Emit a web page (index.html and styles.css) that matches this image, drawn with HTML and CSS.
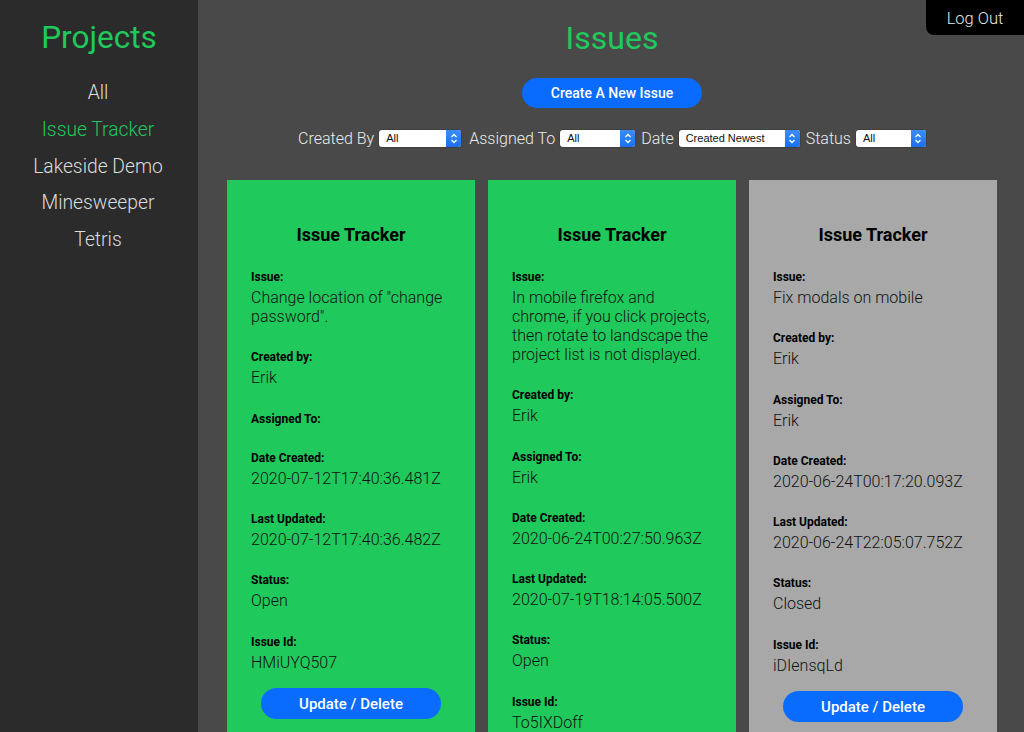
FILE: index.html
```html
<!DOCTYPE html>
<html lang="en">
<head>
<meta charset="utf-8">
<title>Issues</title>
<link rel="stylesheet" href="styles.css">
</head>
<body>
<div class="app">
  <aside class="sidebar">
    <h1 class="side-title">Projects</h1>
    <nav class="side-nav">
      <a class="side-link">All</a>
      <a class="side-link active">Issue Tracker</a>
      <a class="side-link">Lakeside Demo</a>
      <a class="side-link">Minesweeper</a>
      <a class="side-link">Tetris</a>
    </nav>
  </aside>
  <main class="main">
    <button class="logout">Log Out</button>
    <h1 class="main-title">Issues</h1>
    <div class="create-row"><button class="pill create">Create A New Issue</button></div>
    <div class="filters">
      <span class="flabel">Created By</span>
      <span class="select w82 gap8"><span class="sel-text">All</span><span class="sel-arrow"><svg width="8" height="11" viewBox="0 0 8 11"><path d="M1.5 4 L4 1.5 L6.5 4 M1.5 7 L4 9.5 L6.5 7" fill="none" stroke="#fff" stroke-width="1.3"/></svg></span></span>
      <span class="flabel">Assigned To</span>
      <span class="select w75 gap6"><span class="sel-text">All</span><span class="sel-arrow"><svg width="8" height="11" viewBox="0 0 8 11"><path d="M1.5 4 L4 1.5 L6.5 4 M1.5 7 L4 9.5 L6.5 7" fill="none" stroke="#fff" stroke-width="1.3"/></svg></span></span>
      <span class="flabel">Date</span>
      <span class="select w121 gap6"><span class="sel-text">Created Newest</span><span class="sel-arrow"><svg width="8" height="11" viewBox="0 0 8 11"><path d="M1.5 4 L4 1.5 L6.5 4 M1.5 7 L4 9.5 L6.5 7" fill="none" stroke="#fff" stroke-width="1.3"/></svg></span></span>
      <span class="flabel">Status</span>
      <span class="select w70"><span class="sel-text">All</span><span class="sel-arrow"><svg width="8" height="11" viewBox="0 0 8 11"><path d="M1.5 4 L4 1.5 L6.5 4 M1.5 7 L4 9.5 L6.5 7" fill="none" stroke="#fff" stroke-width="1.3"/></svg></span></span>
    </div>
    <div class="cards">
      <section class="card open">
        <h2 class="card-title">Issue Tracker</h2>
        <div class="field"><div class="label">Issue:</div><div class="value">Change location of "change password".</div></div>
        <div class="field"><div class="label">Created by:</div><div class="value">Erik</div></div>
        <div class="field"><div class="label">Assigned To:</div><div class="value"></div></div>
        <div class="field"><div class="label">Date Created:</div><div class="value">2020-07-12T17:40:36.481Z</div></div>
        <div class="field"><div class="label">Last Updated:</div><div class="value">2020-07-12T17:40:36.482Z</div></div>
        <div class="field"><div class="label">Status:</div><div class="value">Open</div></div>
        <div class="field last"><div class="label">Issue Id:</div><div class="value">HMiUYQ507</div></div>
        <button class="pill update">Update / Delete</button>
      </section>
      <section class="card open">
        <h2 class="card-title">Issue Tracker</h2>
        <div class="field"><div class="label">Issue:</div><div class="value">In mobile firefox and chrome, if you click projects, then rotate to landscape the project list is not displayed.</div></div>
        <div class="field"><div class="label">Created by:</div><div class="value">Erik</div></div>
        <div class="field"><div class="label">Assigned To:</div><div class="value">Erik</div></div>
        <div class="field"><div class="label">Date Created:</div><div class="value">2020-06-24T00:27:50.963Z</div></div>
        <div class="field"><div class="label">Last Updated:</div><div class="value">2020-07-19T18:14:05.500Z</div></div>
        <div class="field"><div class="label">Status:</div><div class="value">Open</div></div>
        <div class="field last"><div class="label">Issue Id:</div><div class="value">To5IXDoff</div></div>
        <button class="pill update">Update / Delete</button>
      </section>
      <section class="card closed">
        <h2 class="card-title">Issue Tracker</h2>
        <div class="field"><div class="label">Issue:</div><div class="value">Fix modals on mobile</div></div>
        <div class="field"><div class="label">Created by:</div><div class="value">Erik</div></div>
        <div class="field"><div class="label">Assigned To:</div><div class="value">Erik</div></div>
        <div class="field"><div class="label">Date Created:</div><div class="value">2020-06-24T00:17:20.093Z</div></div>
        <div class="field"><div class="label">Last Updated:</div><div class="value">2020-06-24T22:05:07.752Z</div></div>
        <div class="field"><div class="label">Status:</div><div class="value">Closed</div></div>
        <div class="field last"><div class="label">Issue Id:</div><div class="value">iDIensqLd</div></div>
        <button class="pill update">Update / Delete</button>
      </section>
    </div>
  </main>
</div>
</body>
</html>
```
FILE: styles.css
```css
* { box-sizing: border-box; }
html, body {
  margin: 0;
  height: 100%;
  overflow: hidden;
}
body {
  font-family: Roboto, "Liberation Sans", sans-serif;
  background: #494949;
}
.app {
  display: flex;
  height: 100%;
}
.sidebar {
  width: 198px;
  flex: none;
  background: #2b2b2b;
  display: flex;
  flex-direction: column;
  align-items: center;
}
.side-title {
  margin: 19px 0 0;
  font-size: 31.5px;
  font-weight: 400;
  line-height: 38px;
  color: #21c95c;
}
.side-nav {
  margin-top: 18px;
  display: flex;
  flex-direction: column;
  align-items: center;
  padding-right: 2px;
}
.side-link {
  font-size: 19.3px;
  font-weight: 300;
  line-height: 36.75px;
  color: #dcdcdc;
}
.side-link.active { color: #21c95c; }

.main {
  position: relative;
  flex: 1;
  display: flex;
  flex-direction: column;
  align-items: center;
  padding-left: 2px;
}
.logout {
  position: absolute;
  top: 0;
  right: 0;
  width: 98px;
  height: 35px;
  border: 0;
  border-bottom-left-radius: 8px;
  background: #000;
  color: #e6e6e6;
  font-family: Roboto, sans-serif;
  font-size: 16.5px;
  font-weight: 300;
  padding: 1px 0 0;
}
.main-title {
  margin: 19px 0 0;
  font-size: 32px;
  font-weight: 400;
  line-height: 38px;
  color: #21c95c;
}
.create-row { margin-top: 21px; }
.pill {
  border: 0;
  border-radius: 16px;
  background: #0a6cff;
  color: #fff;
  font-family: Roboto, sans-serif;
  font-weight: 500;
  padding: 0;
}
.create {
  width: 180px;
  height: 30px;
  font-size: 14px;
}
.filters {
  margin-top: 21px;
  display: flex;
  align-items: center;
  height: 18px;
}
.flabel {
  font-size: 16px;
  font-weight: 300;
  color: #ececec;
  margin-right: 5px;
}
.select {
  display: flex;
  height: 17px;
  background: #fff;
  border-radius: 3px;
  overflow: hidden;
  box-shadow: 0 0 0 0.5px rgba(0,0,0,0.25);
}
.gap8 { margin-right: 8px; }
.gap6 { margin-right: 6px; }
.sel-text {
  flex: 1;
  font-family: "Liberation Sans", Arial, sans-serif;
  font-size: 11px;
  line-height: 17px;
  color: #111;
  padding-left: 7px;
  white-space: nowrap;
}
.sel-arrow {
  width: 15px;
  background: linear-gradient(#3b8ef8, #1a6ff0);
  display: flex;
  align-items: center;
  justify-content: center;
}
.w82 { width: 82px; }
.w75 { width: 75px; }
.w121 { width: 121px; }
.w70 { width: 70px; }

.cards {
  margin-top: 33px;
  display: flex;
  gap: 13px;
  justify-content: center;
  align-items: flex-start;
}
.card {
  width: 248px;
  padding: 0 24px 24px;
  display: flex;
  flex-direction: column;
}
.card.open { background: #20c95b; }
.card.closed { background: #a8a8a8; }
.card-title {
  margin: 43.5px 0 25.5px;
  text-align: center;
  font-size: 18px;
  font-weight: 700;
  line-height: 21px;
  color: #000;
}
.field { margin-bottom: 24.3px; }
.field.last { margin-bottom: 16.6px; }
.label {
  font-size: 12px;
  font-weight: 700;
  line-height: 14px;
  color: #000;
}
.value {
  margin-top: 4px;
  font-size: 16px;
  font-weight: 300;
  line-height: 19px;
  color: #111;
}
.value:empty { margin-top: 1px; }
.update {
  align-self: center;
  width: 180px;
  height: 31px;
  font-size: 15px;
}
```
